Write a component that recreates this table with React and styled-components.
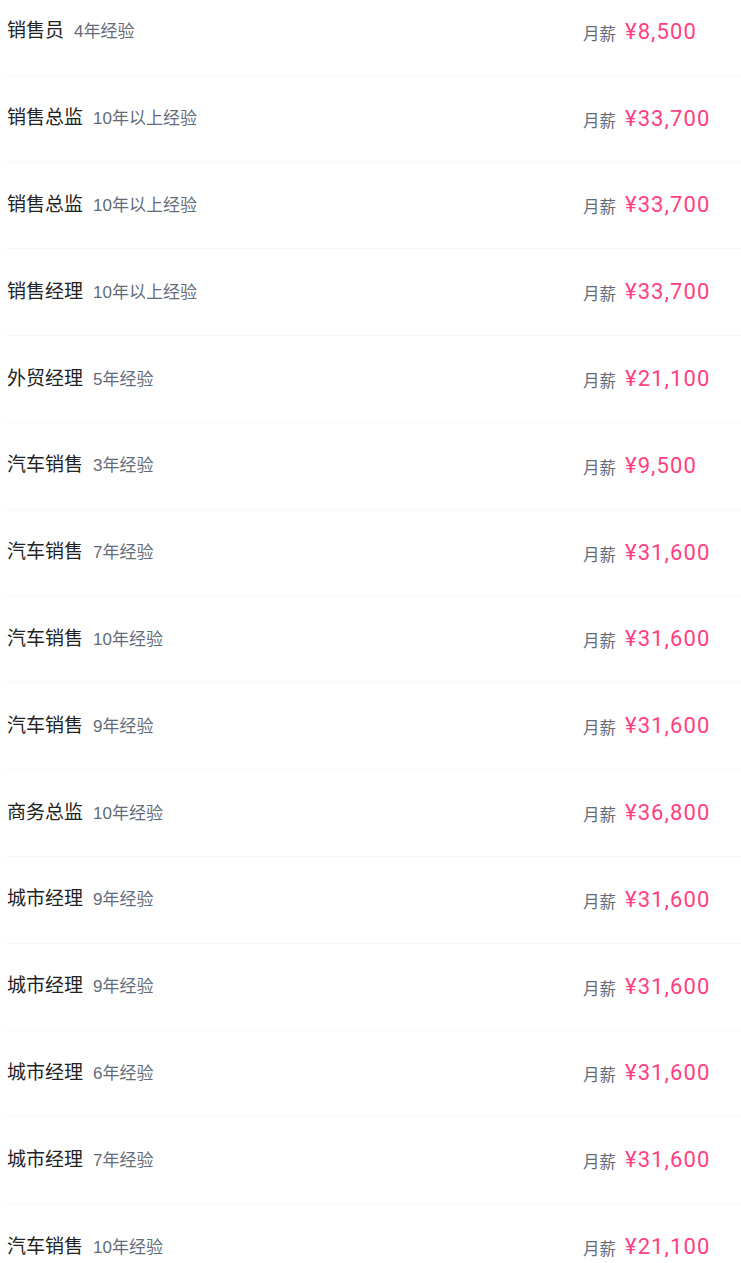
import React from 'react';
import styled, { createGlobalStyle } from 'styled-components';

const jobs = [
    { title: '销售员', exp: '4年经验', salary: '¥8,500' },
    { title: '销售总监', exp: '10年以上经验', salary: '¥33,700' },
    { title: '销售总监', exp: '10年以上经验', salary: '¥33,700' },
    { title: '销售经理', exp: '10年以上经验', salary: '¥33,700' },
    { title: '外贸经理', exp: '5年经验', salary: '¥21,100' },
    { title: '汽车销售', exp: '3年经验', salary: '¥9,500' },
    { title: '汽车销售', exp: '7年经验', salary: '¥31,600' },
    { title: '汽车销售', exp: '10年经验', salary: '¥31,600' },
    { title: '汽车销售', exp: '9年经验', salary: '¥31,600' },
    { title: '商务总监', exp: '10年经验', salary: '¥36,800' },
    { title: '城市经理', exp: '9年经验', salary: '¥31,600' },
    { title: '城市经理', exp: '9年经验', salary: '¥31,600' },
    { title: '城市经理', exp: '6年经验', salary: '¥31,600' },
    { title: '城市经理', exp: '7年经验', salary: '¥31,600' },
    { title: '汽车销售', exp: '10年经验', salary: '¥21,100' },
];

const App = () => {
    return (
        <>
            <GlobalStyle />
            <JobList>
                {jobs.map((job, i) => (
                    <JobRow key={i}>
                        <Info>
                            <Title>{job.title}</Title>
                            <Exp>{job.exp}</Exp>
                        </Info>
                        <Pay>
                            <PayLabel>月薪</PayLabel>
                            <Salary>{job.salary}</Salary>
                        </Pay>
                    </JobRow>
                ))}
            </JobList>
        </>
    );
};

export default App;


const GlobalStyle = createGlobalStyle`
    html, body {
        margin: 0;
        padding: 0;
        background: #fff;
        overflow: hidden;
    }
    body {
        font-family: "Liberation Sans", "Noto Sans CJK SC", sans-serif;
    }
`

const JobList = styled.ul`
    list-style: none;
    margin: -11px 0 0;
    padding: 0 0 0 4px;
`

const JobRow = styled.li`
    box-sizing: border-box;
    height: 86.8px;
    display: flex;
    align-items: center;
    justify-content: space-between;
    padding-left: 3px;
    border-bottom: 1px solid #f6f8f9;
`

const Info = styled.div`
    display: flex;
    align-items: baseline;
    gap: 10px;
`

const Title = styled.span`
    font-size: 19px;
    line-height: 24px;
    color: #222;
`

const Exp = styled.span`
    font-size: 17px;
    line-height: 24px;
    color: #646b78;
`

const Pay = styled.div`
    width: 158px;
    flex-shrink: 0;
    display: flex;
    align-items: center;
    gap: 9px;
`

const PayLabel = styled.span`
    font-size: 16.5px;
    line-height: 24px;
    color: #646b78;
    padding-top: 4px;
`

const Salary = styled.span`
    font-family: Roboto, "Liberation Sans", sans-serif;
    font-size: 22px;
    letter-spacing: 1.1px;
    line-height: 28px;
    color: #ff4080;
`
